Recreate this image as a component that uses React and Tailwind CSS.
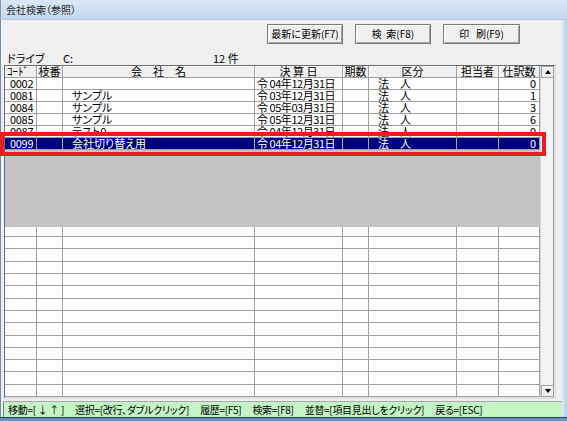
import React from "react";

const W = ["w-[32px]", "w-[26px]", "w-[192px]", "w-[88px]", "w-[26px]", "w-[88px]", "w-[42px]", "w-[41px]"];

const rows = [
  ["0002", "", "", "令 04年12月31日", "", "法\u3000人", "", "0"],
  ["0081", "", "サンプル", "令 03年12月31日", "", "法\u3000人", "", "1"],
  ["0084", "", "サンプル", "令 05年03月31日", "", "法\u3000人", "", "3"],
  ["0085", "", "サンプル", "令 05年12月31日", "", "法\u3000人", "", "6"],
  ["0087", "", "テスト0", "令 04年12月31日", "", "法\u3000人", "", "0"],
];
const selRow = ["0099", "", "会社切り替え用", "令 04年12月31日", "", "法\u3000人", "", "0"];

function Cell({ w, className = "", children }) {
  return (
    <div className={`${w} shrink-0 h-full border-r border-[#a0a0a0] whitespace-nowrap ${className}`}>
      {children}
    </div>
  );
}

function Row({ r, sel, grow }) {
  return (
    <div
      className={`flex border-b border-[#a0a0a0] text-[11px] leading-[11px] ${grow ? "flex-1" : "h-[12px]"} ${
        sel ? "bg-[#000080] text-white" : "bg-white text-black"
      }`}
    >
      <Cell w={W[0]} className="pl-[5px] tracking-[-0.3px]">{r[0]}</Cell>
      <Cell w={W[1]}>{r[1]}</Cell>
      <Cell w={W[2]} className="pl-[9px]">{r[2]}</Cell>
      <Cell w={W[3]} className="pl-[2px] tracking-[-0.45px]">{r[3]}</Cell>
      <Cell w={W[4]}>{r[4]}</Cell>
      <Cell w={W[5]} className="pl-[9px]">{r[5]}</Cell>
      <Cell w={W[6]}>{r[6]}</Cell>
      <Cell w={W[7]} className="text-right pr-[3px]">{r[7]}</Cell>
    </div>
  );
}

const empty = ["", "", "", "", "", "", "", ""];

function Btn({ children, className = "" }) {
  return (
    <div
      className={`h-[20px] flex items-center justify-center bg-[#f0f0f0] border border-[#7a7a7a] shadow-[inset_1px_1px_0_#ffffff,inset_-1px_-1px_0_#a0a0a0] text-[10px] leading-[10px] text-black whitespace-nowrap ${className}`}
    >
      {children}
    </div>
  );
}

export default function App() {
  return (
    <div
      className="relative w-[567px] h-[421px] overflow-hidden flex flex-col bg-[#f0f0f0] text-black [font-feature-settings:'palt']"
      style={{ fontFamily: '"Noto Sans CJK JP", "Noto Sans", sans-serif' }}
    >
      {/* title bar */}
      <div className="h-[20px] shrink-0 flex items-center pl-[5px] bg-gradient-to-b from-[#dbe7f5] to-[#c5d8ee] border-b border-[#b4c8de] border-l border-l-[#7f9bbb] text-[10px] leading-[10px] text-[#1e1e1e]">
        会社検索（参照）
      </div>

      <div className="flex-1 flex min-h-0">
        <div className="flex-1 flex flex-col border-l border-[#6d8db0]">
          {/* buttons */}
          <div className="h-[24px] shrink-0 flex items-end pl-[266px] gap-[12px]">
            <Btn className="w-[76px]">最新に更新(F7)</Btn>
            <Btn className="w-[76px]">検&nbsp;&nbsp;索(F8)</Btn>
            <Btn className="w-[77px]">印&nbsp;&nbsp;&nbsp;刷(F9)</Btn>
          </div>
          {/* drive */}
          <div className="h-[21px] shrink-0 flex pt-[8px] text-[11px] leading-[12px]">
            <span className="pl-[6px] w-[62px]">ドライブ</span>
            <span className="w-[150px]">C:</span>
            <span>12 件</span>
          </div>
          {/* table */}
          <div className="ml-[3px] w-[552px] h-[334px] shrink-0 flex border-t border-l border-[#6a6a6a] border-r-2 border-r-[#e0e0e0] border-b-2 border-b-[#e0e0e0]">
            <div className="w-[535px] flex flex-col">
              {/* header */}
              <div className="flex h-[12px] border-b border-[#a0a0a0] bg-[#f0f0f0] text-[11px] leading-[11px]">
                <Cell w={W[0]} className="pl-[2px] shadow-[inset_1px_1px_0_#fff]">ｺｰﾄﾞ</Cell>
                <Cell w={W[1]} className="text-center shadow-[inset_1px_1px_0_#fff]">枝番</Cell>
                <Cell w={W[2]} className="text-center shadow-[inset_1px_1px_0_#fff]">会　社　名</Cell>
                <Cell w={W[3]} className="text-center shadow-[inset_1px_1px_0_#fff]">決 算 日</Cell>
                <Cell w={W[4]} className="text-center shadow-[inset_1px_1px_0_#fff]">期数</Cell>
                <Cell w={W[5]} className="text-center shadow-[inset_1px_1px_0_#fff]">区分</Cell>
                <Cell w={W[6]} className="text-center shadow-[inset_1px_1px_0_#fff]">担当者</Cell>
                <Cell w={W[7]} className="text-center shadow-[inset_1px_1px_0_#fff]">仕訳数</Cell>
              </div>
              {rows.map((r) => (
                <Row key={r[0]} r={r} />
              ))}
              <Row r={selRow} sel />
              <div className="h-[77px] shrink-0 bg-[#c4c4c4]" />
              <div className="flex-1 flex flex-col">
                <div className="h-[10px] shrink-0 flex flex-col">
                  <Row r={empty} grow />
                </div>
                {Array.from({ length: 13 }).map((_, i) => (
                  <Row key={i} r={empty} grow />
                ))}
              </div>
            </div>
            {/* scrollbar */}
            <div className="w-[14px] flex flex-col bg-[#f0f0f0] border-l border-[#d8d8d8]">
              <div className="h-[12px] shrink-0 flex items-center justify-center bg-[#f0f0f0] border border-[#a0a0a0] shadow-[inset_1px_1px_0_#fff]">
                <svg width="6" height="4" viewBox="0 0 6 4">
                  <polygon points="3,0 6,4 0,4" fill="#000" />
                </svg>
              </div>
              <div className="flex-1 bg-[#f4f4f4] border-r border-[#a0a0a0]" />
              <div className="h-[12px] shrink-0 flex items-center justify-center bg-[#f0f0f0] border border-[#a0a0a0] shadow-[inset_1px_1px_0_#fff]">
                <svg width="6" height="4" viewBox="0 0 6 4">
                  <polygon points="0,0 6,0 3,4" fill="#000" />
                </svg>
              </div>
            </div>
          </div>
          {/* status bar */}
          <div className="mt-[2px] ml-[2px] h-[16px] shrink-0 flex items-center gap-[11px] bg-[#c4f5c4] border-t border-[#a8a8a8] border-l border-l-[#808080] text-[10px] leading-[10px] tracking-[-0.3px] whitespace-nowrap pl-[4px]">
            <span>移動=[ ↓ ↑ ]</span>
            <span>選択=[改行、ダブルクリック]</span>
            <span>履歴=[F5]</span>
            <span>検索=[F8]</span>
            <span>並替=[項目見出しをクリック]</span>
            <span>戻る=[ESC]</span>
          </div>
        </div>
        {/* right frame */}
        <div className="w-[5px] shrink-0 bg-gradient-to-r from-[#dfe9f5] to-[#b9cfe8]" />
      </div>
      {/* bottom frame */}
      <div className="h-[4px] shrink-0 border-t border-[#22405e] bg-[#6f8fb3]" />

      {/* red annotation box */}
      <div className="absolute left-[0px] top-[132px] w-[546px] h-[24px] border-[4px] border-[#ed1c24] pointer-events-none" />
    </div>
  );
}
